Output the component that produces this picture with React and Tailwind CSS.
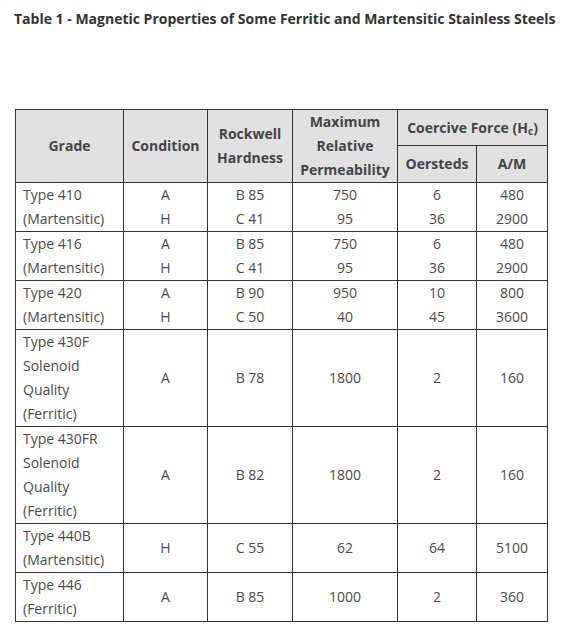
const rows = [
  { grade: ["Type 410", "(Martensitic)"], cond: ["A", "H"], hard: ["B 85", "C 41"], perm: ["750", "95"], oe: ["6", "36"], am: ["480", "2900"] },
  { grade: ["Type 416", "(Martensitic)"], cond: ["A", "H"], hard: ["B 85", "C 41"], perm: ["750", "95"], oe: ["6", "36"], am: ["480", "2900"] },
  { grade: ["Type 420", "(Martensitic)"], cond: ["A", "H"], hard: ["B 90", "C 50"], perm: ["950", "40"], oe: ["10", "45"], am: ["800", "3600"] },
  { grade: ["Type 430F", "Solenoid", "Quality", "(Ferritic)"], cond: ["A"], hard: ["B 78"], perm: ["1800"], oe: ["2"], am: ["160"] },
  { grade: ["Type 430FR", "Solenoid", "Quality", "(Ferritic)"], cond: ["A"], hard: ["B 82"], perm: ["1800"], oe: ["2"], am: ["160"] },
  { grade: ["Type 440B", "(Martensitic)"], cond: ["H"], hard: ["C 55"], perm: ["62"], oe: ["64"], am: ["5100"] },
  { grade: ["Type 446", "(Ferritic)"], cond: ["A"], hard: ["B 85"], perm: ["1000"], oe: ["2"], am: ["360"] },
];

const th = "border border-[#333] bg-[#e1e1e1] px-1 py-0 text-center font-bold text-[#444]";
const td = "border border-[#333] px-1 py-0 text-center align-middle";

function Lines({ items }) {
  return items.map((t, i) => <div key={i}>{t}</div>);
}

export default function App() {
  return (
    <div className="min-h-[635px] bg-white pt-[9px] text-[#4a4a4a]" style={{ fontFamily: '"Open Sans", sans-serif' }}>
      <h2 className="pl-[14px] text-[14px] font-bold leading-5 text-[#333]">
        Table 1 - Magnetic Properties of Some Ferritic and Martensitic Stainless Steels
      </h2>
      <table className="ml-[15px] mt-[80px] w-[532px] table-fixed border-collapse text-[14px] leading-[24px]">
        <colgroup>
          <col className="w-[108px]" />
          <col className="w-[84px]" />
          <col className="w-[85px]" />
          <col className="w-[105px]" />
          <col className="w-[79px]" />
          <col className="w-[71px]" />
        </colgroup>
        <thead>
          <tr className="h-[36px]">
            <th rowSpan={2} className={th}>Grade</th>
            <th rowSpan={2} className={th}>Condition</th>
            <th rowSpan={2} className={th}>Rockwell<br />Hardness</th>
            <th rowSpan={2} className={th}>Maximum<br />Relative<br />Permeability</th>
            <th colSpan={2} className={th}>
              Coercive Force (H<sub className="text-[10px]">c</sub>)
            </th>
          </tr>
          <tr className="h-[37px]">
            <th className={th}>Oersteds</th>
            <th className={th}>A/M</th>
          </tr>
        </thead>
        <tbody>
          {rows.map((r) => (
            <tr key={r.grade[0]}>
              <td className="border border-[#333] py-0 pl-[7px] pr-1 text-left align-top"><Lines items={r.grade} /></td>
              <td className={td}><Lines items={r.cond} /></td>
              <td className={td}><Lines items={r.hard} /></td>
              <td className={td}><Lines items={r.perm} /></td>
              <td className={td}><Lines items={r.oe} /></td>
              <td className={td}><Lines items={r.am} /></td>
            </tr>
          ))}
        </tbody>
      </table>
    </div>
  );
}
